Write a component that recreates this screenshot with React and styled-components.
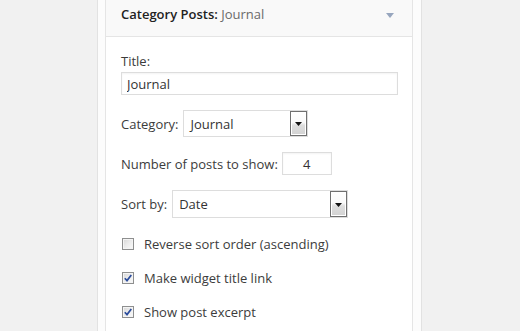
import React from "react";
import styled, { createGlobalStyle } from "styled-components";

const GlobalStyle = createGlobalStyle`
  html, body {
    margin: 0;
    padding: 0;
    background: #f1f1f1;
    font-family: "Open Sans", "Noto Sans", sans-serif;
    overflow: hidden;
  }
  * { box-sizing: border-box; }
`;

const Page = styled.div`
  display: flex;
  height: 331px;
  padding-left: 97px;
`;

const Sidebar = styled.div`
  width: 325px;
  height: 100%;
  background: #fcfcfc;
  border-left: 1px solid #e2e2e2;
  border-right: 1px solid #e2e2e2;
  padding: 0 8px 0 7px;
`;

const Widget = styled.div`
  height: 100%;
  background: #fff;
  border-left: 1px solid #e5e5e5;
  border-right: 1px solid #e5e5e5;
  display: flex;
  flex-direction: column;
`;

const WidgetTop = styled.div`
  display: flex;
  align-items: center;
  justify-content: space-between;
  background: #f9f9f9;
  border-bottom: 1px solid #e5e5e5;
  padding: 8px 18px 15px 15px;
`;

const WidgetTitle = styled.h3`
  margin: 0;
  font-size: 13px;
  line-height: 13px;
  font-weight: 600;
  color: #222;
`;

const InTitle = styled.span`
  font-weight: 400;
  color: #6a6a6a;
`;

const Arrow = styled.svg`
  display: block;
  width: 8px;
  height: 5px;
  margin-top: 2px;
`;

const Body = styled.div`
  padding: 15px 14px 0 15px;
  display: flex;
  flex-direction: column;
`;

const Label = styled.label`
  display: block;
  font-size: 13px;
  line-height: 18px;
  color: #3c3c3c;
`;

const Field = styled.div`
  display: flex;
  flex-direction: column;
  gap: 2px;
  margin-bottom: 15px;
`;

const Row = styled.div`
  display: flex;
  align-items: center;
  gap: ${(p) => p.$gap || 5}px;
  margin-bottom: ${(p) => p.$mb ?? 15}px;
`;

const TextInput = styled.input`
  display: block;
  width: ${(p) => p.$width || "100%"};
  height: 23px;
  margin: 0;
  padding: 0 5px;
  border: 1px solid #ddd;
  border-radius: 0;
  box-shadow: inset 0 1px 2px rgba(0, 0, 0, 0.05);
  background: #fff;
  font-family: inherit;
  font-size: 13px;
  color: #333;
  text-align: ${(p) => p.$align || "left"};
  outline: none;
`;

const SelectBox = styled.div`
  display: flex;
  align-items: stretch;
  width: ${(p) => p.$width}px;
  height: ${(p) => p.$height}px;
  border: 1px solid #ddd;
  background: #fff;
`;

const SelectValue = styled.span`
  flex: 1;
  display: flex;
  align-items: center;
  padding-left: 6px;
  font-size: 13px;
  color: #333;
`;

const DropButton = styled.span`
  width: 17px;
  border: 1px solid #6f6f6f;
  box-shadow: inset 0 0 0 1px #fff;
  background: linear-gradient(#fff 0%, #fafafa 45%, #dedede 58%, #d2d2d2 100%);
  display: flex;
  align-items: flex-start;
  justify-content: center;
  padding-top: ${(p) => p.$pt}px;
`;

const DropArrow = styled.svg`
  display: block;
  width: 7px;
  height: 4px;
`;

const CheckRow = styled.div`
  display: flex;
  align-items: center;
  gap: 10px;
  padding-left: 1px;
  margin-bottom: 16px;
  font-size: 13px;
  line-height: 18px;
  color: #3c3c3c;
`;

const Box = styled.span`
  width: 12px;
  height: 12px;
  flex: none;
  margin-top: -1px;
  border: 1px solid #8e8f8f;
  background: linear-gradient(135deg, #d6d6d6 0%, #ececec 50%, #fbfbfb 100%);
  box-shadow: inset 0 0 0 1px #f4f4f4;
  display: flex;
  align-items: center;
  justify-content: center;
`;

const Check = styled.svg`
  display: block;
  width: 8px;
  height: 8px;
`;

function Select({ value, width, height, pt }) {
  return (
    <SelectBox $width={width} $height={height}>
      <SelectValue>{value}</SelectValue>
      <DropButton $pt={pt}>
        <DropArrow viewBox="0 0 7 4">
          <path d="M0 0h7L3.5 4z" fill="#111" />
        </DropArrow>
      </DropButton>
    </SelectBox>
  );
}

function Checkbox({ checked, children }) {
  return (
    <CheckRow>
      <Box>
        {checked && (
          <Check viewBox="0 0 8 8">
            <path
              d="M0.8 4.2 L3 6.6 L7.3 0.9"
              fill="none"
              stroke="#2b4c9c"
              strokeWidth="1.7"
            />
          </Check>
        )}
      </Box>
      <span>{children}</span>
    </CheckRow>
  );
}

export default function App() {
  return (
    <>
      <GlobalStyle />
      <Page>
        <Sidebar>
          <Widget>
            <WidgetTop>
              <WidgetTitle>
                Category Posts: <InTitle>Journal</InTitle>
              </WidgetTitle>
              <Arrow viewBox="0 0 8 5">
                <path d="M0 0h8L4 5z" fill="#97a6be" />
              </Arrow>
            </WidgetTop>
            <Body>
              <Field>
                <Label>Title:</Label>
                <TextInput defaultValue="Journal" readOnly />
              </Field>
              <Row>
                <Label>Category:</Label>
                <Select value="Journal" width={125} height={27} pt={10} />
              </Row>
              <Row $gap={4}>
                <Label>Number of posts to show:</Label>
                <TextInput defaultValue="4" readOnly $width="50px" $align="center" />
              </Row>
              <Row $mb={17}>
                <Label>Sort by:</Label>
                <Select value="Date" width={176} height={28} pt={11} />
              </Row>
              <Checkbox>Reverse sort order (ascending)</Checkbox>
              <Checkbox checked>Make widget title link</Checkbox>
              <Checkbox checked>Show post excerpt</Checkbox>
            </Body>
          </Widget>
        </Sidebar>
      </Page>
    </>
  );
}
